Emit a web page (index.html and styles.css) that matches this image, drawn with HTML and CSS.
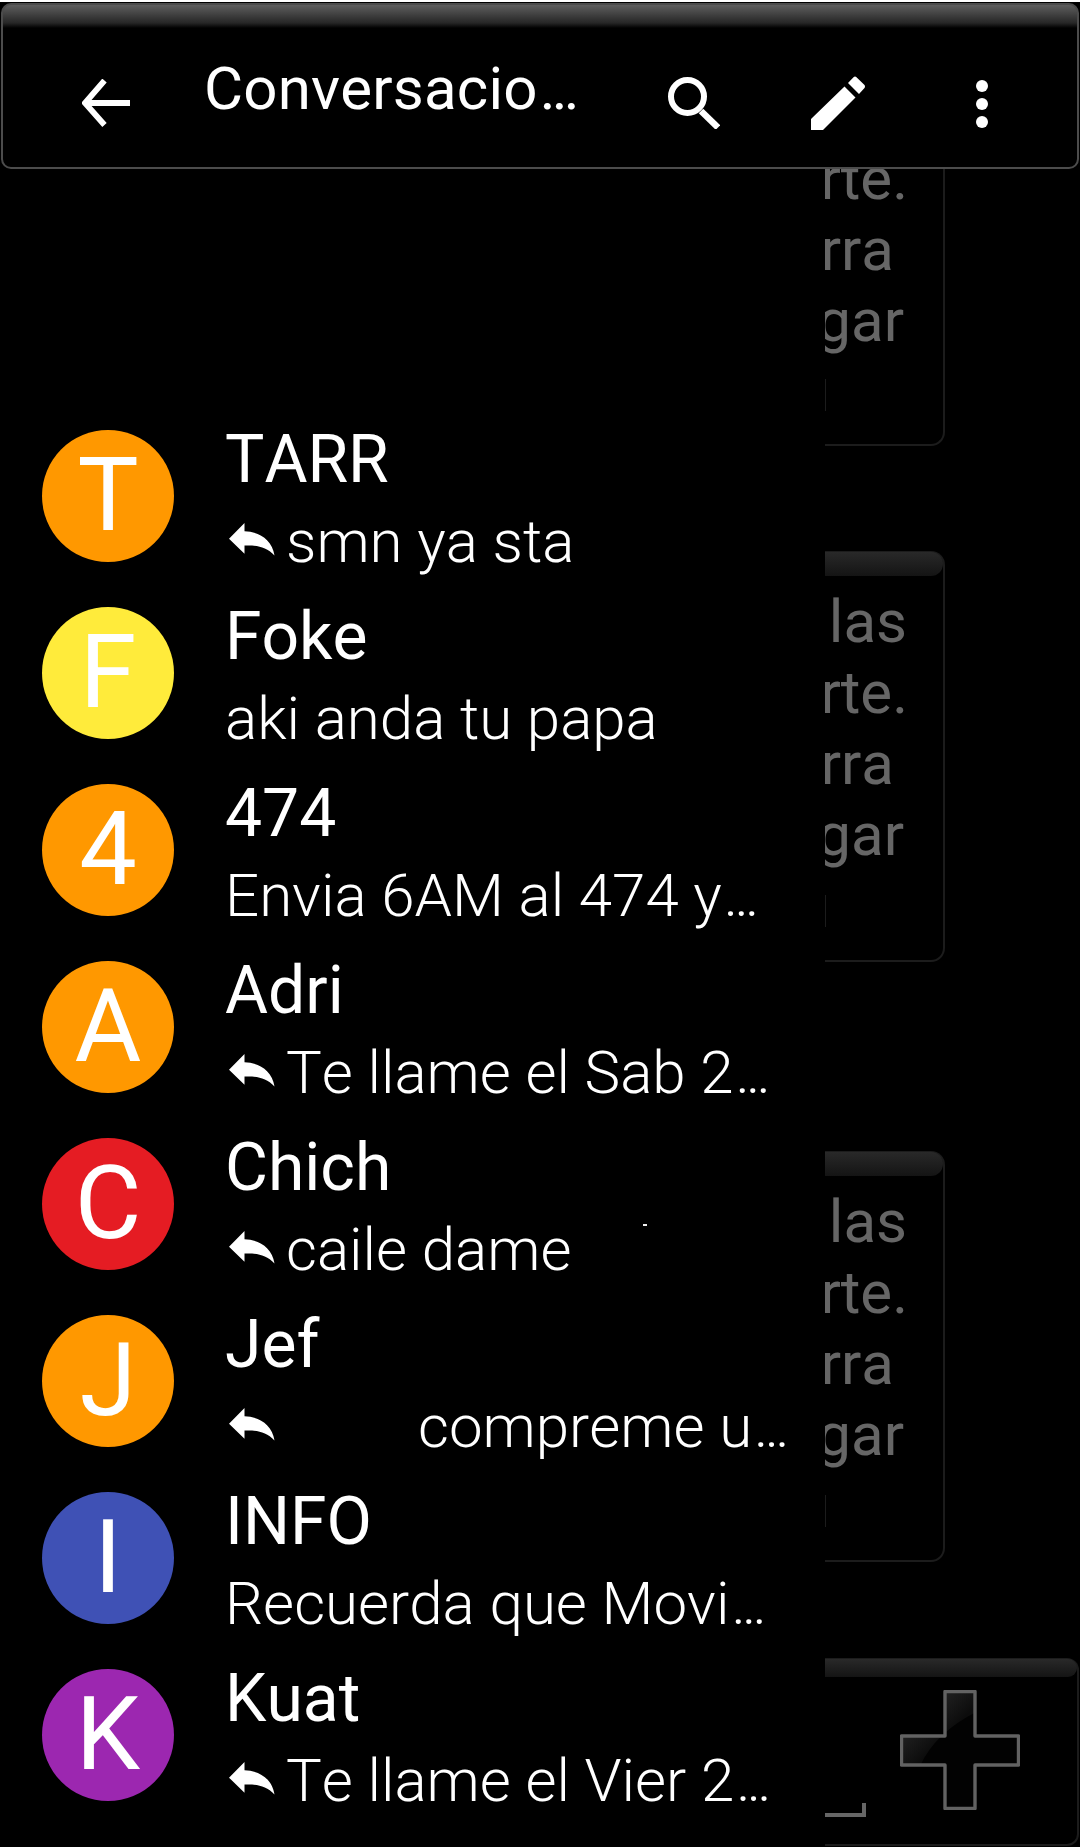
FILE: index.html
```html
<!DOCTYPE html>
<html lang="es">
<head>
<meta charset="utf-8">
<title>Conversaciones</title>
<link rel="stylesheet" href="styles.css">
</head>
<body>
<svg class="defs" width="0" height="0"><defs>
<symbol id="reply" viewBox="0 0 46 38" preserveAspectRatio="none"><path d="M0 18 15.500 0V9.500C29 10 43 18 45.500 37.500 37 27 27 25.500 15.500 26V35.500Z" fill="#fff"/></symbol>
</defs></svg>
<div class="screen">
<header class="bar">
<button class="back" aria-label="Atrás"><svg viewBox="0 0 48 48"><path d="M22.500 1.500 3 24 22.500 46M3.500 24H48" fill="none" stroke="#fff" stroke-width="5.800"/></svg></button>
<h1 class="title">Conversacio<span class="dots">...</span></h1>
<button class="search" aria-label="Buscar"><svg viewBox="0 0 52 52"><circle cx="19.500" cy="19.500" r="16.500" fill="none" stroke="#fff" stroke-width="6"/><path d="M33 34 50 50.500" stroke="#fff" stroke-width="6.500"/></svg></button>
<button class="edit" aria-label="Redactar"><svg viewBox="0 0 54 54"><path d="M0 43 33.500 10.500 44.500 21.500 12 54H0ZM37 7 42.500 1.200Q44 0 45.500 1.200L53.500 9Q54.500 10.500 53.500 12L48 18Z" fill="#fff"/></svg></button>
<button class="more" aria-label="Más"><svg viewBox="0 0 12 48"><circle cx="6" cy="6" r="6" fill="#fff"/><circle cx="6" cy="24" r="6" fill="#fff"/><circle cx="6" cy="42" r="6" fill="#fff"/></svg></button>
</header>
<main class="content">
<ul class="drawer">
<li class="chat"><span class="avatar orange">T</span><div class="info"><b class="name">TARR</b><p class="preview"><svg class="reply"><use href="#reply"/></svg>smn ya sta</p></div></li>
<li class="chat"><span class="avatar yellow">F</span><div class="info"><b class="name">Foke</b><p class="preview">aki anda tu papa</p></div></li>
<li class="chat"><span class="avatar orange">4</span><div class="info"><b class="name">474</b><p class="preview">Envia 6AM al 474 y<span class="dots">...</span></p></div></li>
<li class="chat"><span class="avatar orange">A</span><div class="info"><b class="name">Adri</b><p class="preview"><svg class="reply"><use href="#reply"/></svg>Te llame el Sab 2<span class="dots">...</span></p></div></li>
<li class="chat"><span class="avatar red">C</span><div class="info"><b class="name">Chich</b><p class="preview"><svg class="reply"><use href="#reply"/></svg>caile dame<i class="speck"></i></p></div></li>
<li class="chat"><span class="avatar orange">J</span><div class="info"><b class="name">Jef</b><p class="preview"><svg class="reply"><use href="#reply"/></svg><span class="gap"></span>compreme u<span class="dots">...</span></p></div></li>
<li class="chat"><span class="avatar blue">I</span><div class="info"><b class="name">INFO</b><p class="preview">Recuerda que Movi<span class="dots">...</span></p></div></li>
<li class="chat"><span class="avatar purple">K</span><div class="info"><b class="name">Kuat</b><p class="preview"><svg class="reply"><use href="#reply"/></svg>Te llame el Vier 2<span class="dots">...</span></p></div></li>
</ul>
<section class="thread">
<article class="bubble first"><p class="l2">rte.</p><p class="l3">rra</p><p class="l4">gar</p></article>
<article class="bubble second"><p class="l1">las</p><p class="l2">rte.</p><p class="l3">rra</p><p class="l4">gar</p></article>
<article class="bubble third"><p class="l1">las</p><p class="l2">rte.</p><p class="l3">rra</p><p class="l4">gar</p></article>
<footer class="composer"><span class="field"></span>
<svg class="plus" viewBox="0 0 120 120"><defs><linearGradient id="shine" x1="0" y1="0" x2=".6" y2=".6"><stop offset="0" stop-color="#383838"/><stop offset="1" stop-color="#0c0c0c"/></linearGradient><clipPath id="cross"><path d="M45 1.500H75V46H118.500V75H75V118.500H45V75H1.500V46H45Z"/></clipPath></defs><path d="M45 1.500H75V46H118.500V75H75V118.500H45V75H1.500V46H45Z" fill="#020202"/><path d="M0 0H76V22Q35 43 20 76H0Z" fill="url(#shine)" clip-path="url(#cross)"/><path d="M45 1.500H75V46H118.500V75H75V118.500H45V75H1.500V46H45Z" fill="none" stroke="#626262" stroke-width="3.400" stroke-linejoin="round"/></svg>
</footer>
</section>
</main>
</div>
</body>
</html>
```
FILE: styles.css
```css
* { box-sizing: border-box; margin: 0; padding: 0; }
body { background: #000; color: #fff; font-family: Roboto, sans-serif; font-kerning: none; }
.defs { display: block; height: 0; }
svg { display: block; width: 100%; height: 100%; }
.screen { width: 1080px; height: 1847px; overflow: hidden; display: flex; flex-direction: column; border-top: 2px solid #fff; }
.bar {
  height: 166px; flex: none; margin: 1px 1px 0; display: flex; align-items: flex-start;
  border: 2px solid #4c4c4c; border-radius: 10px;
  background: linear-gradient(#5e5e5e, #262626 18px, #000 23px);
}
.bar button { background: none; border: 0; flex: none; }
.back { width: 48px; height: 48px; margin: 74px 0 0 79px; }
.title { font-size: 60px; font-weight: 400; line-height: 70px; width: 372px; margin: 49px 0 0 74px; white-space: nowrap; letter-spacing: 0.2px; }
.dots { letter-spacing: -3.800px; margin-left: 2px; }
.search { width: 52px; height: 52px; margin: 72px 0 0 92px; }
.edit { width: 54px; height: 54px; margin: 71px 0 0 91px; }
.more { width: 12px; height: 48px; margin: 75px 0 0 111px; }
.content { flex: 1; min-height: 0; display: flex; }
.drawer { width: 825px; flex: none; list-style: none; padding-top: 261px; overflow: hidden; }
.chat { height: 177px; display: flex; padding-left: 42px; }
.avatar { width: 132px; height: 132px; border-radius: 50%; flex: none; text-align: center; font-size: 102.500px; line-height: 130px; }
.orange { background: #ff9800; }
.yellow { background: #ffeb3b; }
.red { background: #e51c23; }
.blue { background: #3f51b5; }
.purple { background: #9c27b0; }
.info { margin-left: 51px; }
.name { display: block; font-weight: 400; font-size: 66px; line-height: 78px; margin-top: -9px; }
.preview { display: flex; align-items: center; font-size: 60px; font-weight: 300; line-height: 70px; margin-top: 8px; white-space: nowrap; }
.reply { width: 46px; height: 33px; flex: none; margin: -6px 11px 0 4px; }
.gap { width: 132px; }
.speck { width: 4px; height: 2px; background: #eee; margin: -50px 0 0 72px; }
.thread { flex: 1; display: flex; flex-direction: column; overflow: hidden; }
.bubble {
  width: 120px; height: 411px; flex: none; padding-top: 33px; display: flex; flex-direction: column; align-items: flex-end;
  position: relative; font-size: 60px; line-height: 71px; color: #666; white-space: nowrap;
  border: 2px solid #1c1c1c; border-left: 0; border-radius: 0 14px 14px 0;
}
/* glossy strip along the top edge */
.bubble::before, .composer::before {
  content: ""; position: absolute; top: -1px; left: 0; right: 0; height: 24px;
  background: linear-gradient(#292929, #141414); border-radius: 0 12px 12px 0;
}
/* edge of the timestamp under the message */
.bubble::after { content: ""; position: absolute; left: 0; bottom: 33px; width: 1px; height: 32px; background: #1c1c1c; }
.first { height: 277px; padding-top: 0; border-top: 0; border-top-right-radius: 0; }
.first::before { display: none; }
.first .l2 { margin-top: -26px; }
.second { margin-top: 105px; }
.third { margin-top: 189px; }
.l1 { margin-right: 36px; }
.l2 { margin-right: 35px; }
.l3 { margin-right: 49px; }
.l4 { margin-right: 39px; }
.composer {
  height: 188px; margin: 96px 1px 0 0; flex: none; display: flex; align-items: flex-start; position: relative;
  border: 2px solid #1c1c1c; border-left: 0; border-radius: 0 12px 12px 0;
}
.composer::before { height: 18px; border-radius: 0 10px 10px 0; }
.field { width: 41px; height: 14px; margin-top: 143px; border: solid #666; border-width: 0 4px 4px 0; }
.plus { width: 120px; height: 120px; margin: 30px 0 0 34px; }
```
